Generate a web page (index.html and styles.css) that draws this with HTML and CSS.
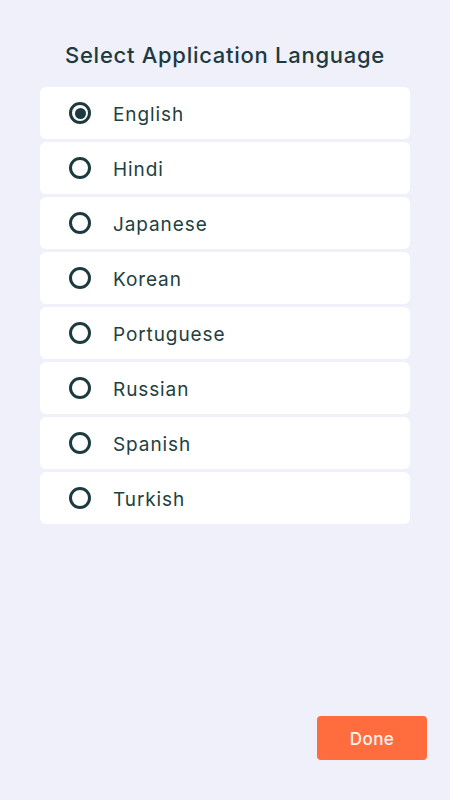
FILE: index.html
```html
<!DOCTYPE html>
<html>
<head>
<meta charset="utf-8">
<link rel="stylesheet" href="styles.css">
</head>
<body>
<div class="screen">
  <h1 class="title">Select Application Language</h1>
  <ul class="list">
    <li class="item selected"><span class="radio"></span><span class="label">English</span></li>
    <li class="item"><span class="radio"></span><span class="label">Hindi</span></li>
    <li class="item"><span class="radio"></span><span class="label">Japanese</span></li>
    <li class="item"><span class="radio"></span><span class="label">Korean</span></li>
    <li class="item"><span class="radio"></span><span class="label">Portuguese</span></li>
    <li class="item"><span class="radio"></span><span class="label">Russian</span></li>
    <li class="item"><span class="radio"></span><span class="label">Spanish</span></li>
    <li class="item"><span class="radio"></span><span class="label">Turkish</span></li>
  </ul>
  <div class="footer">
    <button class="done">Done</button>
  </div>
</div>
</body>
</html>
```
FILE: styles.css
```css
html, body {
  margin: 0;
  padding: 0;
}
body {
  background: #f0f0fb;
  font-family: "Inter", "Noto Sans", sans-serif;
  color: #1d3b3f;
}
.screen {
  height: 800px;
  display: flex;
  flex-direction: column;
  box-sizing: border-box;
  padding: 0 23px 40px 40px;
}
.title {
  margin: 41px 0 0 0;
  padding-right: 17px;
  font-size: 22px;
  font-weight: 500;
  text-align: center;
  line-height: 28px;
  letter-spacing: 0.72px;
}
.list {
  list-style: none;
  margin: 18px 0 0 0;
  padding: 0;
  width: 370px;
  display: flex;
  flex-direction: column;
  gap: 3px;
}
.item {
  height: 52px;
  background: #ffffff;
  border-radius: 6px;
  display: flex;
  align-items: center;
  padding-left: 29px;
}
.radio {
  width: 16px;
  height: 16px;
  border: 3px solid #1d3b3f;
  border-radius: 50%;
  box-sizing: content-box;
  display: flex;
  align-items: center;
  justify-content: center;
}
.selected .radio::after {
  content: "";
  width: 11px;
  height: 11px;
  border-radius: 50%;
  background: #1d3b3f;
}
.label {
  margin-left: 22px;
  padding-top: 2px;
  font-size: 19px;
  color: #23403f;
  letter-spacing: 0.9px;
}
.footer {
  margin-top: auto;
  display: flex;
  justify-content: flex-end;
}
.done {
  width: 110px;
  height: 44px;
  border: none;
  border-radius: 4px;
  background: #ff6d3f;
  color: #fff3ee;
  font-family: "Inter", "Noto Sans", sans-serif;
  font-size: 17px;
  font-weight: 500;
  letter-spacing: 0.4px;
  padding-top: 2px;
}
```
